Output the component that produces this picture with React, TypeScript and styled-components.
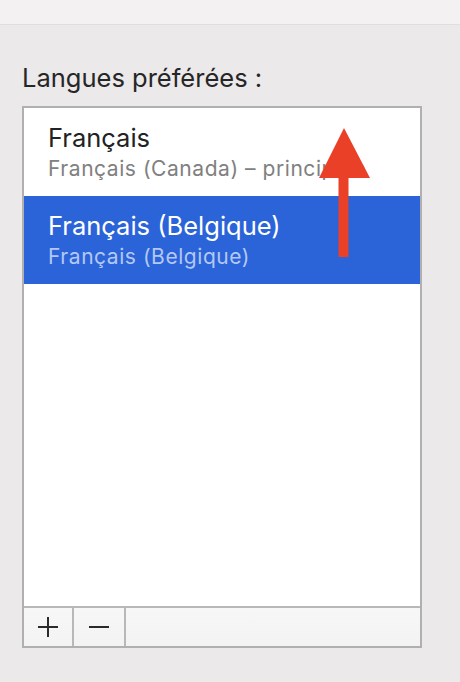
import styled, { createGlobalStyle } from "styled-components";

const GlobalStyle = createGlobalStyle`
    html, body {
        margin: 0;
        padding: 0;
        background: #ebe9ea;
        font-family: Inter, "Liberation Sans", Arial, sans-serif;
    }
`;

const languages = [
    { name: "Français", region: "Français (Canada) – principale", selected: false },
    { name: "Français (Belgique)", region: "Français (Belgique)", selected: true },
];

const PlusIcon = () => (
    <svg width="22" height="22" viewBox="0 0 22 22">
        <path d="M11 1v20M1 11h20" stroke="#2a2a2a" strokeWidth="2" fill="none" />
    </svg>
);

const MinusIcon = () => (
    <svg width="22" height="22" viewBox="0 0 22 22">
        <path d="M1 11h20" stroke="#2a2a2a" strokeWidth="2" fill="none" />
    </svg>
);

// flèche rouge d'annotation, posée par-dessus la liste
const UpArrow = () => (
    <ArrowWrap>
        <svg width="52" height="131" viewBox="0 0 52 131">
            <polygon points="25,0 0,50 51,50" fill="#e94027" />
            <rect x="19.5" y="49" width="10" height="80" fill="#e94027" />
        </svg>
    </ArrowWrap>
);

const LanguageRow = ({ name, region, selected }) => {
    return (
        <Row selected={selected}>
            <Name selected={selected}>{name}</Name>
            <Region selected={selected}>{region}</Region>
        </Row>
    );
};

export default function App() {
    return (
        <>
            <GlobalStyle />
            <TopBar />
            <Content>
                <Label>Langues préférées :</Label>
                <ListBox>
                    <List>
                        {languages.map((item) => (
                            <LanguageRow key={item.name} {...item} />
                        ))}
                        <UpArrow />
                    </List>
                    <Toolbar>
                        <ToolButton width={48}>
                            <PlusIcon />
                        </ToolButton>
                        <ToolButton width={50}>
                            <MinusIcon />
                        </ToolButton>
                        <ToolFill />
                    </Toolbar>
                </ListBox>
            </Content>
        </>
    );
}

const TopBar = styled.div`
    height: 24px;
    background: #f3f1f2;
    border-bottom: 1px solid #e0dedf;
`;

const Content = styled.div`
    padding: 38px 0 0 22px;
`;

const Label = styled.div`
    font-size: 25.5px;
    line-height: 30px;
    color: #262626;
    margin-bottom: 13px;
`;

const ListBox = styled.div`
    width: 396px;
    border: 2px solid #b0b0b0;
    background: #fff;
    display: flex;
    flex-direction: column;
`;

const List = styled.div`
    position: relative;
    height: 498px;
    display: flex;
    flex-direction: column;
`;

const Row = styled.div<{ selected: boolean }>`
    height: 88px;
    box-sizing: border-box;
    padding: 14px 0 0 24px;
    background: ${(props) => (props.selected ? "#2b63d9" : "#fff")};
`;

const Name = styled.div<{ selected: boolean }>`
    font-size: 25.5px;
    line-height: 32px;
    color: ${(props) => (props.selected ? "#fff" : "#222")};
`;

const Region = styled.div<{ selected: boolean }>`
    font-size: 21px;
    letter-spacing: 0.55px;
    line-height: 30px;
    color: ${(props) => (props.selected ? "#b3c8f3" : "#808080")};
`;

const ArrowWrap = styled.div`
    position: absolute;
    left: 295px;
    top: 20px;
    line-height: 0;
`;

const Toolbar = styled.div`
    height: 38px;
    border-top: 2px solid #b8b8b8;
    display: flex;
    background: linear-gradient(#f7f7f7, #f3f3f3);
`;

const ToolButton = styled.div<{ width: number }>`
    width: ${(props) => props.width}px;
    border-right: 2px solid #b8b8b8;
    display: flex;
    align-items: center;
    justify-content: center;
`;

const ToolFill = styled.div`
    flex: 1;
`;
